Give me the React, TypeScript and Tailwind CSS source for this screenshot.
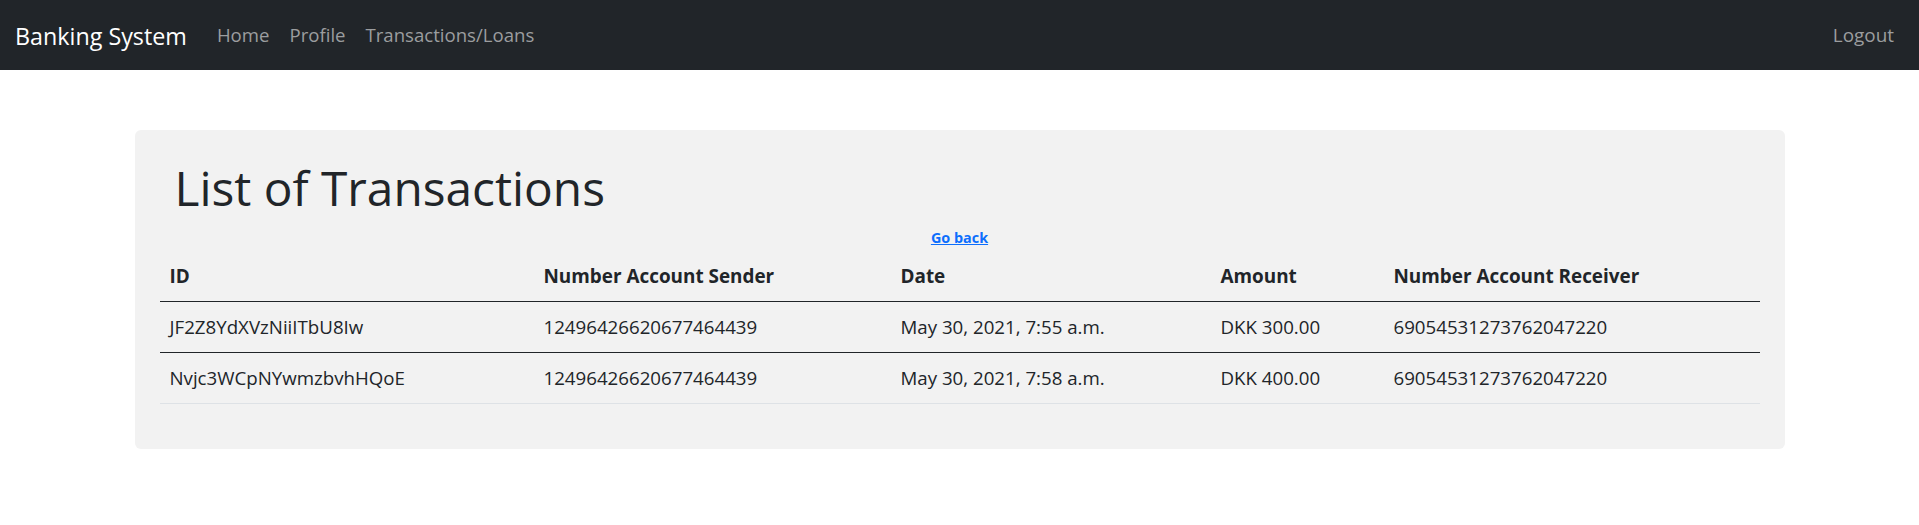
import React from 'react'

type Tx = {
  id: string
  sender: string
  date: string
  amount: string
  receiver: string
}

const TRANSACTIONS: Tx[] = [
  {
    id: 'JF2Z8YdXVzNiiITbU8Iw',
    sender: '12496426620677464439',
    date: 'May 30, 2021, 7:55 a.m.',
    amount: 'DKK 300.00',
    receiver: '69054531273762047220',
  },
  {
    id: 'Nvjc3WCpNYwmzbvhHQoE',
    sender: '12496426620677464439',
    date: 'May 30, 2021, 7:58 a.m.',
    amount: 'DKK 400.00',
    receiver: '69054531273762047220',
  },
]

const FONT = { fontFamily: '"Open Sans", "Noto Sans", sans-serif' }

export default function App() {
  return (
    <div className="min-h-screen bg-white text-[#212529]" style={FONT}>
      <nav className="flex h-[70px] items-center bg-[#212529] px-[15px]">
        <a href="#" className="mr-[20px] pt-[3px] text-[23.3px] leading-[37px] text-white">
          Banking System
        </a>
        <ul className="flex">
          {['Home', 'Profile', 'Transactions/Loans'].map((l) => (
            <li key={l}>
              <a href="#" className="block px-[10px] text-[18.6px] leading-[30px] text-[#9b9d9f]">
                {l}
              </a>
            </li>
          ))}
        </ul>
        <a href="#" className="ml-auto block px-[10px] text-[18.9px] leading-[30px] text-[#9b9d9f]">
          Logout
        </a>
      </nav>

      <div className="mx-auto mt-[60px] w-[1650px] rounded-[6px] bg-[#f2f2f2] px-[25px] pt-[28px] pb-[25px]">
        <h1 className="mb-[6px] pl-[15px] text-[47.8px] leading-[60px] font-normal">List of Transactions</h1>
        <div className="h-[27px] text-center leading-[26px]">
          <a href="#" className="text-[14.4px] font-bold text-[#0d6efd] underline">
            Go back
          </a>
        </div>

        <table className="mb-[20px] w-full table-fixed border-collapse text-left text-[18.7px] leading-[30px]">
          <colgroup>
            <col className="w-[374px]" />
            <col className="w-[357px]" />
            <col className="w-[320px]" />
            <col className="w-[173px]" />
            <col />
          </colgroup>
          <thead>
            <tr className="border-b border-[#212529]">
              {['ID', 'Number Account Sender', 'Date', 'Amount', 'Number Account Receiver'].map((h) => (
                <th key={h} className="px-[10px] py-[10px] text-[18.9px] font-bold">
                  {h}
                </th>
              ))}
            </tr>
          </thead>
          <tbody>
            {TRANSACTIONS.map((t, i) => (
              <tr
                key={t.id}
                className={i === TRANSACTIONS.length - 1 ? 'border-b border-[#dee2e6]' : 'border-b border-[#212529]'}
              >
                <td className="px-[10px] py-[10px]">{t.id}</td>
                <td className="px-[10px] py-[10px]">{t.sender}</td>
                <td className="px-[10px] py-[10px]">{t.date}</td>
                <td className="px-[10px] py-[10px]">{t.amount}</td>
                <td className="px-[10px] py-[10px]">{t.receiver}</td>
              </tr>
            ))}
          </tbody>
        </table>
      </div>
    </div>
  )
}
